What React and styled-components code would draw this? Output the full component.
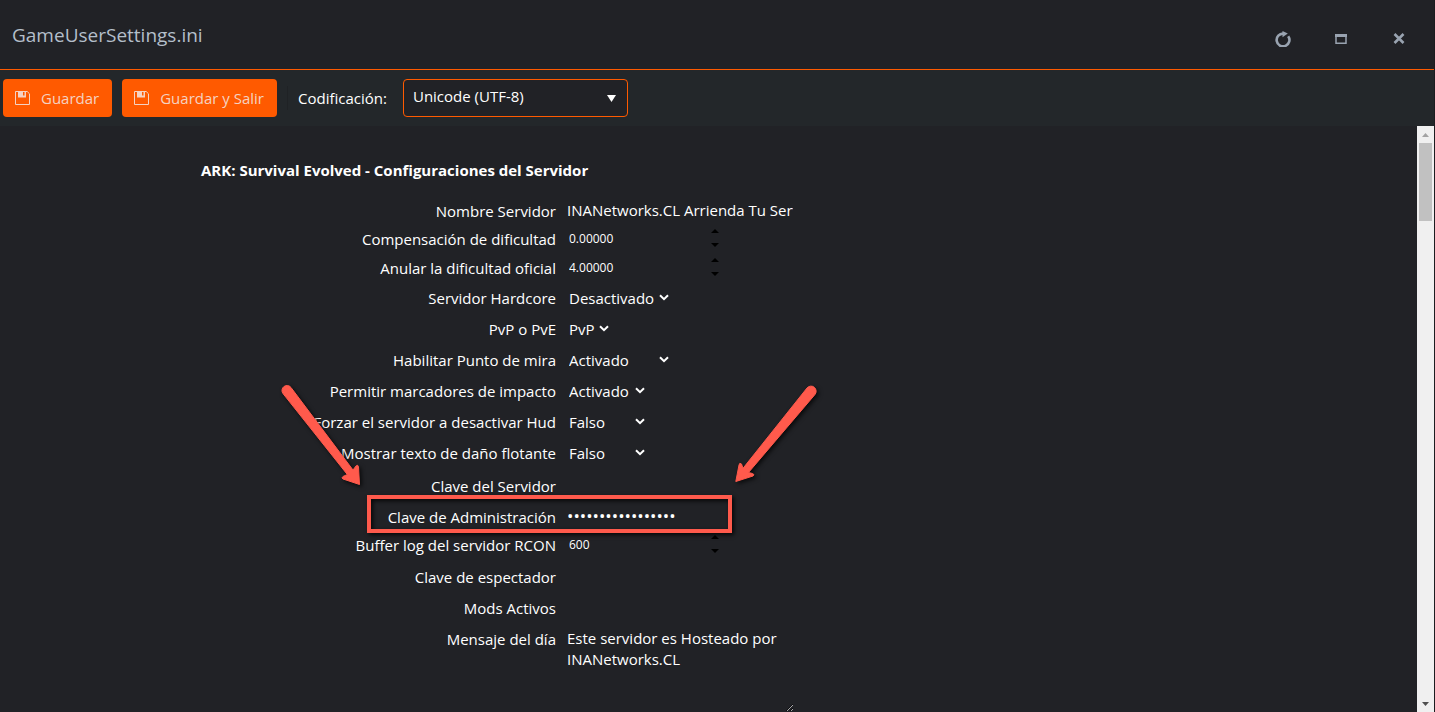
import React from 'react'
import styled, { createGlobalStyle } from 'styled-components'

const onOff = ['Activado', 'Desactivado']
const trueFalse = ['Falso', 'Verdadero']

const fields = [
  { id: 'name', type: 'text', label: 'Nombre Servidor', value: 'INANetworks.CL Arrienda Tu Servidor' },
  { id: 'difficulty', type: 'number', label: 'Compensación de dificultad', value: '0.00000' },
  { id: 'override', type: 'number', label: 'Anular la dificultad oficial', value: '4.00000' },
  { id: 'hardcore', type: 'select', label: 'Servidor Hardcore', value: 'Desactivado', options: onOff, size: 102 },
  { id: 'pvp', type: 'select', label: 'PvP o PvE', value: 'PvP', options: ['PvP', 'PvE'], size: 42 },
  { id: 'crosshair', type: 'select', label: 'Habilitar Punto de mira', value: 'Activado', options: onOff, size: 102 },
  { id: 'hitmarkers', type: 'select', label: 'Permitir marcadores de impacto', value: 'Activado', options: onOff, size: 78 },
  { id: 'hud', type: 'select', label: 'Forzar el servidor a desactivar Hud', value: 'Falso', options: trueFalse, size: 78 },
  { id: 'damage', type: 'select', label: 'Mostrar texto de daño flotante', value: 'Falso', options: trueFalse, size: 78 },
  { id: 'password', type: 'password', label: 'Clave del Servidor', value: '' },
  { id: 'admin', type: 'password', label: 'Clave de Administración', value: 'contrasenaadmin17', marked: true },
  { id: 'rcon', type: 'number', label: 'Buffer log del servidor RCON', value: '600' },
  { id: 'spectator', type: 'password', label: 'Clave de espectador', value: '' },
  { id: 'mods', type: 'text', label: 'Mods Activos', value: '' },
  { id: 'motd', type: 'textarea', label: 'Mensaje del día', value: 'Este servidor es Hosteado por INANetworks.CL' },
]

function SaveIcon() {
  return (
    <svg width="15" height="14" viewBox="0 0 15 14" fill="none" aria-hidden="true">
      <path d="M.5.5h11.7l2.3 2.3v10.7H.5z" stroke="currentColor" />
      <path d="M3 0h8v6.500H3zM8 1v3.500h1.500V1z" fill="currentColor" fillRule="evenodd" />
    </svg>
  )
}

function RefreshIcon() {
  return (
    <svg width="16" height="16" viewBox="0 0 16 16" fill="none" aria-hidden="true">
      <path d="M13.200 5.200A6.400 6.400 0 1 1 8.500 2.600" stroke="currentColor" strokeWidth="2.600" />
      <path d="M7.500 0l5.300 2.600-5.300 3.600z" fill="currentColor" />
    </svg>
  )
}

function MaximizeIcon() {
  return (
    <svg width="12" height="10" viewBox="0 0 12 10" fill="none" aria-hidden="true">
      <path d="M1 1h10v8.300H1z" stroke="currentColor" strokeWidth="1.500" />
      <path d="M0 0h12v3H0z" fill="currentColor" />
    </svg>
  )
}

function CloseIcon() {
  return (
    <svg width="12" height="11" viewBox="0 0 12 11" fill="none" aria-hidden="true">
      <path d="M1.500 1l9 9M10.500 1l-9 9" stroke="currentColor" strokeWidth="2.600" />
    </svg>
  )
}

function Triangle({ width, height, up }) {
  const d = up ? `M0 ${height}h${width}L${width / 2} 0z` : `M0 0h${width}L${width / 2} ${height}z`
  return (
    <svg width={width} height={height} aria-hidden="true">
      <path d={d} fill="currentColor" />
    </svg>
  )
}

function Control({ field }) {
  let { id, type, value, options, size } = field
  if (type === 'number') {
    return (
      <NumberBox>
        <NumberInput id={id} type="text" inputMode="decimal" defaultValue={value} />
        <Spinner>
          <SpinButton type="button" aria-label="Aumentar"><Triangle width={8} height={4} up /></SpinButton>
          <SpinButton type="button" aria-label="Disminuir"><Triangle width={8} height={4} /></SpinButton>
        </Spinner>
      </NumberBox>
    )
  }
  if (type === 'select') {
    return (
      <SelectBox $width={size}>
        <Select id={id} defaultValue={value}>
          {options.map((option) => <option key={option}>{option}</option>)}
        </Select>
        <svg width="10" height="7" viewBox="0 0 10 7" fill="none" aria-hidden="true">
          <path d="M1 1.200l4 4 4-4" stroke="#fff" strokeWidth="2" />
        </svg>
      </SelectBox>
    )
  }
  if (type === 'textarea') {
    return <TextArea id={id} defaultValue={value} />
  }
  return <TextInput id={id} type={type} defaultValue={value} autoComplete="off" />
}

function Arrows() {
  return (
    <ArrowLayer width="560" height="120" viewBox="0 0 560 120" aria-hidden="true">
      <g fill="#ff5a4c" stroke="#ff5a4c" strokeWidth="1" strokeLinejoin="round">
        <path d="M13 18.600L77.300 99.500 73 101.500Q71 103 73 104L89.500 109.500 88.500 92Q88 89 86 91L83 95 21 12.500A5 5 0 0 0 13 18.600z" />
        <path d="M537 13L473 93.300 471.500 89Q469.500 87 469 90L465.800 106.500 483 101Q485 99.500 482.500 98.500L478.500 97.500 545 19.500A5 5 0 0 0 537 13z" />
      </g>
    </ArrowLayer>
  )
}

function App() {
  return (
    <Window>
      <GlobalStyle />
      <Header>
        <Title>GameUserSettings.ini</Title>
        <Actions>
          <IconButton type="button" aria-label="Recargar"><RefreshIcon /></IconButton>
          <IconButton type="button" aria-label="Maximizar"><MaximizeIcon /></IconButton>
          <IconButton type="button" aria-label="Cerrar"><CloseIcon /></IconButton>
        </Actions>
      </Header>
      <Toolbar>
        <SaveButton type="button"><SaveIcon />Guardar</SaveButton>
        <SaveButton type="button"><SaveIcon />Guardar y Salir</SaveButton>
        <Separator />
        <EncodingLabel htmlFor="encoding">Codificación:</EncodingLabel>
        <EncodingBox>
          <EncodingSelect id="encoding" defaultValue="Unicode (UTF-8)">
            <option>Unicode (UTF-8)</option>
          </EncodingSelect>
          <Triangle width={9} height={7} />
        </EncodingBox>
      </Toolbar>
      <Body>
        <Form>
          <Heading>ARK: Survival Evolved - Configuraciones del Servidor</Heading>
          <Rows>
            {fields.map((field) => (
              <Row key={field.id} $type={field.type}>
                <Label htmlFor={field.id} $type={field.type}>{field.label}</Label>
                <Control field={field} />
                {field.marked && <Mark />}
              </Row>
            ))}
            <Arrows />
          </Rows>
        </Form>
        <ScrollBar>
          <ScrollEnd $color="#a3a3a3"><Triangle width={7} height={4} up /></ScrollEnd>
          <Thumb />
          <ScrollEnd $color="#505050"><Triangle width={7} height={4} /></ScrollEnd>
        </ScrollBar>
      </Body>
    </Window>
  )
}

export default App

const GlobalStyle = createGlobalStyle`
  * {
    box-sizing: border-box;
  }
  body {
    margin: 0;
    background: #212226;
    color: #fff;
    overflow: hidden;
  }
  body, button, input, select, textarea {
    font-family: 'Open Sans', 'Noto Sans', sans-serif;
    font-size: 15px;
    line-height: 21px;
  }
  svg {
    display: block;
    flex: none;
  }
`
const Window = styled.div`
  display: flex;
  flex-direction: column;
  height: 100vh;
  border-right: 1px solid #1c1d20;
`
const Header = styled.header`
  display: flex;
  justify-content: space-between;
  align-items: center;
  height: 70px;
  flex: none;
  padding: 0 6px 0 12px;
  border-bottom: 1px solid #ff5a00;
`
const Title = styled.h1`
  margin: 0;
  padding-top: 2px;
  font-size: 19px;
  font-weight: 400;
  color: #b4bfca;
`
const Actions = styled.div`
  display: flex;
  padding-top: 8px;
`
const IconButton = styled.button`
  display: flex;
  justify-content: center;
  align-items: center;
  width: 58px;
  height: 32px;
  padding: 0;
  border: none;
  background: transparent;
  color: #99a3b0;
`
const Toolbar = styled.div`
  display: flex;
  align-items: center;
  height: 56px;
  flex: none;
  padding: 0 3px;
  background: #23272a;
`
const SaveButton = styled.button`
  display: flex;
  align-items: center;
  gap: 11px;
  height: 38px;
  margin-right: 10px;
  padding: 0 13px 0 12px;
  border: none;
  border-radius: 4px;
  background: #ff5a00;
  color: #f5d2c2;
`
const Separator = styled.div`
  width: 1px;
  height: 24px;
  margin-right: 10px;
  background: #1f2225;
`
const EncodingLabel = styled.label`
  margin-right: 16px;
`
const EncodingBox = styled.div`
  position: relative;
  width: 225px;
  svg {
    position: absolute;
    right: 12px;
    top: 16px;
    pointer-events: none;
  }
`
const EncodingSelect = styled.select`
  appearance: none;
  display: block;
  width: 100%;
  height: 38px;
  padding: 0 24px 4px 9px;
  border: 1px solid #ff5a00;
  border-radius: 4px;
  background: #212226;
  color: #fff;
`
const Body = styled.div`
  display: flex;
  flex: 1;
  min-height: 0;
`
const Form = styled.form`
  flex: 1;
  overflow: hidden;
  padding: 34px 0 0 201px;
`
const Heading = styled.h2`
  margin: 0 0 13px;
  font-size: 15px;
  font-weight: 700;
  line-height: 21px;
`
const Rows = styled.div`
  position: relative;
`
const heights = { text: 31, password: 31, number: 29, select: 31, textarea: 90 }
const labelTops = { text: 4, password: 4, number: 0, select: 0, textarea: 7 }
const Row = styled.div`
  position: relative;
  display: grid;
  grid-template-columns: 355px 1fr;
  column-gap: 11px;
  align-items: ${({ $type }) => ($type === 'textarea' ? 'start' : 'center')};
  height: ${({ $type }) => heights[$type]}px;
`
const Label = styled.label`
  padding-top: ${({ $type }) => labelTops[$type]}px;
  text-align: right;
`
const TextInput = styled.input`
  width: 226px;
  height: 28px;
  padding: 0;
  border: none;
  outline: none;
  background: transparent;
  color: #fff;
  &[type='password'] {
    font-size: 17px;
  }
`
const TextArea = styled.textarea`
  display: block;
  width: 227px;
  height: 90px;
  padding: 6px 0 0;
  border: none;
  outline: none;
  background: transparent;
  color: #fff;
  resize: both;
`
const NumberBox = styled.div`
  display: flex;
  align-items: center;
  justify-content: space-between;
  width: 152px;
  padding-bottom: 3px;
`
const NumberInput = styled.input`
  width: 130px;
  height: 24px;
  padding: 0 2px;
  border: none;
  outline: none;
  background: transparent;
  color: #fff;
  font-size: 12px;
`
const Spinner = styled.div`
  display: flex;
  flex-direction: column;
  gap: 10px;
`
const SpinButton = styled.button`
  display: block;
  padding: 0;
  border: none;
  background: transparent;
  color: #000;
`
const SelectBox = styled.div`
  position: relative;
  width: ${({ $width }) => $width}px;
  svg {
    position: absolute;
    right: 0;
    top: 9px;
    pointer-events: none;
  }
`
const Select = styled.select`
  appearance: none;
  display: block;
  width: 100%;
  height: 27px;
  padding: 0 0 0 2px;
  border: none;
  outline: none;
  background: transparent;
  color: #fff;
`
/* highlight frame around the admin password row */
const Mark = styled.div`
  position: absolute;
  left: 166px;
  top: -5px;
  width: 365px;
  height: 38px;
  border: 4px solid #ff5a4c;
  box-shadow: 2px 2px 4px rgba(0, 0, 0, 0.8), inset 2px 2px 4px rgba(0, 0, 0, 0.8);
  pointer-events: none;
`
const ArrowLayer = styled.svg`
  position: absolute;
  left: 69px;
  top: 181px;
  pointer-events: none;
  filter: drop-shadow(2px 2px 2px rgba(0, 0, 0, 0.7));
`
const ScrollBar = styled.div`
  display: flex;
  flex-direction: column;
  align-items: center;
  width: 17px;
  background: #f0f0f0;
`
const ScrollEnd = styled.div`
  display: flex;
  justify-content: center;
  align-items: center;
  height: 17px;
  color: ${({ $color }) => $color};
  &:last-child {
    margin-top: auto;
  }
`
const Thumb = styled.div`
  width: 13px;
  height: 78px;
  background: #c1c1c1;
`
